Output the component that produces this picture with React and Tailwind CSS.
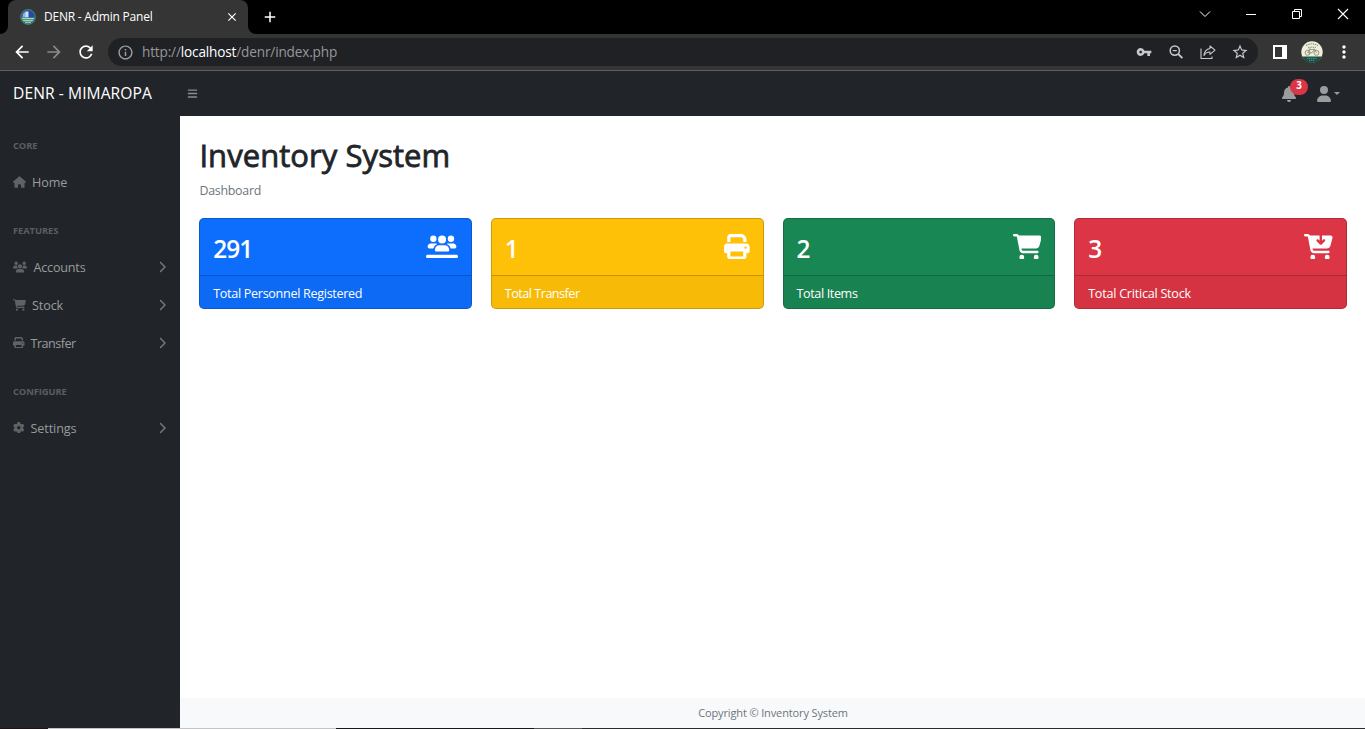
import React from 'react';
import {
  FaHouse, FaUsers, FaCartShopping, FaPrint, FaGear, FaUsersLine,
  FaCartArrowDown, FaBell, FaUser, FaBars, FaChevronRight,
} from 'react-icons/fa6';
import {
  MdArrowBack, MdArrowForward, MdRefresh, MdInfoOutline, MdVpnKey,
  MdStarBorder, MdMoreVert, MdClose, MdAdd,
} from 'react-icons/md';

function SiteLogo() {
  return (
    <svg viewBox="0 0 16 16" className="size-4 shrink-0">
      <circle cx="8" cy="8" r="7.3" fill="#2447b4" stroke="#3f7f66" strokeWidth="1.2" />
      <path d="M3 4.5L6 2.6v6H2.4z" fill="#8fb0de" />
      <path d="M5.5 2.5h3v6h-3z" fill="#d3e0f4" />
      <path d="M1.2 8.6h13.6a7 7 0 0 1-13.6 0z" fill="#4f9a78" />
      <path d="M2 9.5h12M3 11.6h10M5 13.7h6" stroke="#b4dcc6" strokeWidth=".9" />
    </svg>
  );
}

function Avatar() {
  return (
    <svg viewBox="0 0 22 22" className="size-[22px]">
      <circle cx="11" cy="11" r="10.7" fill="#f2eedb" />
      <path d="M1.2 15.5h19.6a10.7 10.7 0 0 1-19.6 0z" fill="#174f46" />
      <path d="M5 4.6Q11 1 17 4.6M7 6.2h8" fill="none" stroke="#7b8a72" strokeWidth="1.1" strokeDasharray="1.5 .8" />
      <g fill="none" stroke="#77806b" strokeWidth=".8">
        <circle cx="6.6" cy="11.8" r="2.5" />
        <circle cx="15.4" cy="11.8" r="2.5" />
        <path d="M6.6 11.8L8.6 8.6h5l-3 3.4zM13.2 7.6l2.2 4.2M7.6 8h2" />
      </g>
      <path d="M6 17.3h10M8 19.3h6" stroke="#7fa597" strokeWidth=".8" strokeDasharray="1.3 .6" />
    </svg>
  );
}

function TabStrip() {
  return (
    <div className="flex h-[34px] bg-black">
      <div className="relative ml-2 flex w-60 items-center rounded-t-lg bg-[#353535] pr-[9px] pl-3">
        <svg viewBox="0 0 8 8" className="absolute bottom-0 -left-2 size-2"><path d="M8 0v8H0a8 8 0 0 0 8-8z" fill="#353535" /></svg>
        <svg viewBox="0 0 8 8" className="absolute -right-2 bottom-0 size-2"><path d="M0 0v8h8a8 8 0 0 1-8-8z" fill="#353535" /></svg>
        <SiteLogo />
        <span className="ml-2 flex-1 text-[12px] tracking-[-0.22px] text-white">DENR - Admin Panel</span>
        <MdClose className="size-3.5 text-white" />
      </div>
      <MdAdd className="mt-2 ml-[13px] size-[18px] text-white" />
      <div className="ml-auto flex">
        <svg viewBox="0 0 12 12" className="mt-2 mr-[35px] size-3" fill="none" stroke="#fff" strokeWidth="1"><path d="M1 3.5l5 5 5-5" /></svg>
        <svg viewBox="0 0 12 12" className="mt-2 mr-[34px] size-3" fill="none" stroke="#fff" strokeWidth="1"><path d="M0 6.5h10" /></svg>
        <svg viewBox="0 0 12 12" className="mt-2 mr-[33px] size-3" fill="none" stroke="#fff" strokeWidth="1"><path d="M.5 3.5h7v7h-7zM2.5 3V1.5h7v7H8" /></svg>
        <svg viewBox="0 0 12 12" className="mt-2 mr-4 size-3" fill="none" stroke="#fff" strokeWidth="1.1"><path d="M1 1l10 10M11 1L1 11" /></svg>
      </div>
    </div>
  );
}

function Toolbar() {
  return (
    <div className="flex h-[37px] items-center border-b border-[#5d5f61] bg-[#353535] pl-3">
      <MdArrowBack className="size-5 text-white" />
      <MdArrowForward className="ml-3 size-5 text-[#8a8a8a]" />
      <MdRefresh className="ml-3 size-5 text-white" />
      <div className="ml-3 flex h-7 w-[1150px] items-center rounded-full bg-[#202124] pr-[9px] pl-[9px] text-[#c7c8c9]">
        <MdInfoOutline className="size-[17px] text-[#9aa0a6]" />
        <span className="ml-2 flex-1 text-[13.6px] tracking-[-0.16px] text-[#969799]">
          http://<span className="text-white">localhost</span>/denr/index.php
        </span>
        <MdVpnKey className="mr-[16px] size-4" />
        <svg viewBox="0 0 16 16" className="mr-4 size-4" fill="none" stroke="currentColor" strokeWidth="1.5">
          <circle cx="6.8" cy="6.6" r="4.6" />
          <path d="M10.2 10l4.2 4.2" strokeWidth="1.8" />
          <path d="M4.8 6.6h4" strokeWidth="1.2" />
        </svg>
        <svg viewBox="0 0 16 16" className="mr-[15px] size-4" fill="none" stroke="currentColor" strokeWidth="1.1">
          <path d="M1 4.5v10h11v-2" />
          <path d="M10 2l5 4.2-5 4.2V8Q6 7.8 4 11.5 4.6 5.4 10 4.5z" strokeLinejoin="round" />
        </svg>
        <MdStarBorder className="size-[18px]" />
      </div>
      <svg viewBox="0 0 14 14" className="ml-[15px] size-3.5"><path d="M1 1h12v12H1z" fill="none" stroke="#fff" strokeWidth="2" /><path d="M9 1h4v12H9z" fill="#fff" /></svg>
      <div className="ml-[14px]"><Avatar /></div>
      <MdMoreVert className="ml-[11px] size-5 text-white" />
    </div>
  );
}

function TopNav() {
  return (
    <nav className="flex h-[45px] items-center bg-[#212529] pl-[13px]">
      <span className="w-[173.5px] pt-px text-[15.6px] tracking-[0.08px] text-white">DENR - MIMAROPA</span>
      <FaBars className="size-[11px] text-[#8b8d8f]" />
      <div className="relative mr-[19px] ml-auto text-[#9a9c9e]">
        <FaBell className="size-4" />
        <span className="absolute -top-[7px] left-[9px] flex h-4 w-[18px] items-center justify-center rounded-full bg-[#dc3545] text-[9.8px] font-bold text-white">3</span>
      </div>
      <FaUser className="size-4 text-[#9a9c9e]" />
      <span className="mr-[25px] ml-[2px] border-x-[3px] border-t-[3px] border-x-transparent border-t-[#9a9c9e]" />
    </nav>
  );
}

function Heading({ children, className }) {
  return <div className={`h-[47px] pt-[23px] text-[9.4px] leading-[14px] font-bold text-[#5b5e61] ${className}`}>{children}</div>;
}

function NavItem({ icon: Icon, iconClass, label, labelClass, expandable }) {
  return (
    <a className="flex h-[38px] items-center">
      <Icon className={`mb-px shrink-0 text-[#606366] ${iconClass}`} />
      <span className={`pt-[2px] text-[12.6px] text-[#999b9d] ${labelClass}`}>{label}</span>
      {expandable && <FaChevronRight className="mr-[14px] mb-px ml-auto h-3 w-[8px] text-[#73767a]" />}
    </a>
  );
}

function Sidebar() {
  return (
    <aside className="w-[180px] shrink-0 bg-[#212529] pl-[13px]">
      <Heading className="tracking-[-0.1px]">CORE</Heading>
      <NavItem icon={FaHouse} iconClass="h-[12px] w-[13px]" label="Home" labelClass="ml-[6px] tracking-[-0.1px]" />
      <Heading className="tracking-[-0.08px]">FEATURES</Heading>
      <NavItem expandable icon={FaUsers} iconClass="h-[14px] w-[14px]" label="Accounts" labelClass="ml-[6.5px] tracking-[-0.2px]" />
      <NavItem expandable icon={FaCartShopping} iconClass="h-[12px] w-[13px]" label="Stock" labelClass="ml-[6px] tracking-[-0.1px]" />
      <NavItem expandable icon={FaPrint} iconClass="size-[11.5px]" label="Transfer" labelClass="ml-[6px] tracking-[-0.52px]" />
      <Heading className="tracking-[-0.1px]">CONFIGURE</Heading>
      <NavItem expandable icon={FaGear} iconClass="size-[11.5px]" label="Settings" labelClass="ml-[6px] tracking-[-0.1px]" />
    </aside>
  );
}

function Card({ value, label, icon: Icon, iconClass, color, labelClass }) {
  return (
    <div className={`flex h-[91px] flex-1 flex-col overflow-hidden rounded-[5px] border border-black/20 bg-clip-border text-white ${color}`}>
      <div className="flex h-[56px] items-center justify-between px-[12.8px]">
        <span className="mt-[4px] text-[24.4px] leading-8 font-semibold tracking-[-0.9px]">{value}</span>
        <Icon className={`mb-px shrink-0 ${iconClass}`} />
      </div>
      <div className="flex flex-1 items-center border-t border-black/20 bg-black/[0.03] px-[12.8px]">
        <span className={`mt-[4px] text-[12.6px] leading-4 ${labelClass}`}>{label}</span>
      </div>
    </div>
  );
}

export default function App() {
  return (
    <div className="flex h-[729px] w-[1365px] flex-col overflow-hidden bg-white font-['Open_Sans',sans-serif]">
      <TabStrip />
      <Toolbar />
      <TopNav />
      <div className="flex min-h-0 flex-1">
        <Sidebar />
        <div className="flex flex-1 flex-col">
          <main className="flex-1 pr-[18.2px] pl-[19.4px]">
            <h1 className="mt-[20px] text-[31px] leading-[38px] tracking-[0.06px] text-[#212529] [-webkit-text-stroke:0.8px_#212529]">Inventory System</h1>
            <p className="mt-[7px] text-[12.4px] leading-5 tracking-[-0.25px] text-[#6c757d]">Dashboard</p>
            <div className="mt-[17px] flex gap-[19.2px]">
              <Card value="291" label="Total Personnel Registered" labelClass="tracking-[-0.31px]" icon={FaUsersLine} iconClass="h-[25.6px] w-8" color="bg-[#0d6efd]" />
              <Card value="1" label="Total Transfer" labelClass="tracking-[-0.5px]" icon={FaPrint} iconClass="size-[25.6px]" color="bg-[#ffc107]" />
              <Card value="2" label="Total Items" labelClass="tracking-[-0.38px]" icon={FaCartShopping} iconClass="h-[25.6px] w-[28.8px]" color="bg-[#198754]" />
              <Card value="3" label="Total Critical Stock" labelClass="tracking-[-0.24px]" icon={FaCartArrowDown} iconClass="h-[25.6px] w-[28.8px]" color="bg-[#dc3545]" />
            </div>
          </main>
          <footer className="flex h-[30px] items-center justify-center bg-[#f8f9fa] pl-px text-[11px] tracking-[-0.13px] text-[#6c757d]">Copyright © Inventory System</footer>
        </div>
      </div>
      <div className="flex h-px shrink-0 bg-[#2b2b2b]">
        <div className="w-12 bg-[#1d1414]" />
        <div className="w-72 bg-[#c4c4c4]" />
        <div className="w-[198px] bg-[#181818]" />
        <div className="w-12 bg-[#555]" />
      </div>
    </div>
  );
}
